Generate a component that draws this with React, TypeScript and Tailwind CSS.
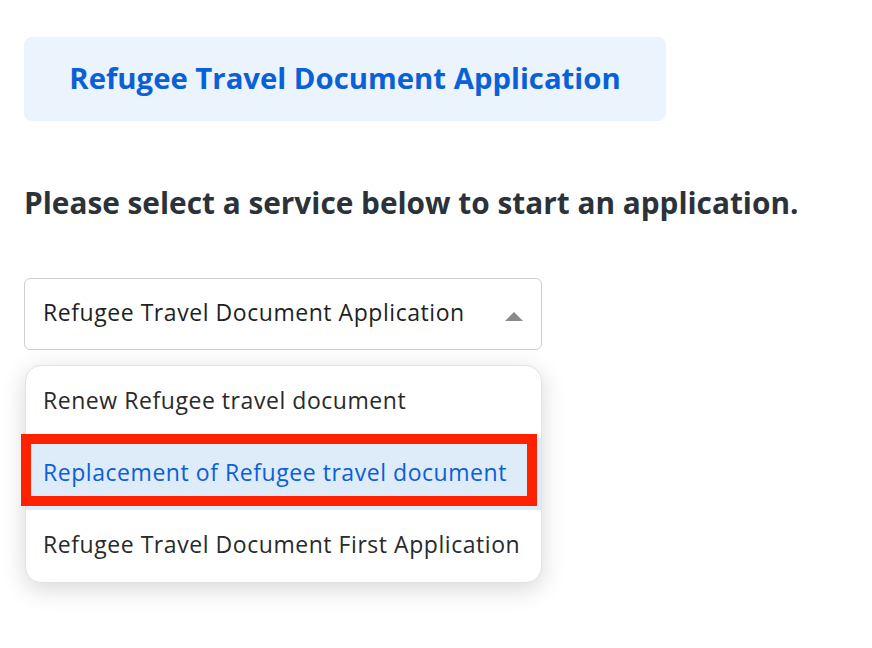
export default function App() {
  const options = [
    'Renew Refugee travel document',
    'Replacement of Refugee travel document',
    'Refugee Travel Document First Application',
  ]
  const selected = 1

  return (
    <div className="min-h-[648px] bg-white pl-6 pt-[37px]" style={{ fontFamily: '"Open Sans", "Noto Sans", sans-serif' }}>
      <div className="flex h-[84px] w-[642px] items-center justify-center rounded-lg bg-[#ebf3fd]">
        <h1 className="text-[29.3px] font-bold text-[#0a60d6]">Refugee Travel Document Application</h1>
      </div>

      <h2 className="mt-[64px] h-9 text-[29.8px] font-bold leading-9 text-[#2c323a]">
        Please select a service below to start an application.
      </h2>

      <div className="mt-[57px] flex h-[72px] w-[518px] items-center justify-between rounded-md border border-[#cfcfcf] pl-[18px] pr-[18px]">
        <span className="pb-1 text-[23px] tracking-[0.55px] text-[#1f1f1f]">Refugee Travel Document Application</span>
        <svg width="18" height="9" viewBox="0 0 18 9" className="mt-1">
          <path d="M0 9 L9 0 L18 9 Z" fill="#8a8a8a" />
        </svg>
      </div>

      <div className="relative ml-px mt-[15px] w-[517px]">
        <ul className="overflow-hidden rounded-2xl border border-[#e2e2e2] bg-white shadow-[0_6px_24px_rgba(0,0,0,0.16)]">
          {options.map((o, i) => (
            <li
              key={o}
              className={
                i === selected
                  ? 'flex h-[72px] items-center bg-[#deebf8] pb-1 pl-[17px] text-[23px] tracking-[0.55px] text-[#0a60d6]'
                  : 'flex h-[72px] items-center pb-1 pl-[17px] text-[23px] tracking-[0.55px] text-[#2a2a2a]'
              }
            >
              {o}
            </li>
          ))}
        </ul>
        <div className="pointer-events-none absolute left-[-4px] top-[69px] h-[72px] w-[516px] border-[10px] border-[#ff2200]" />
      </div>
    </div>
  )
}
